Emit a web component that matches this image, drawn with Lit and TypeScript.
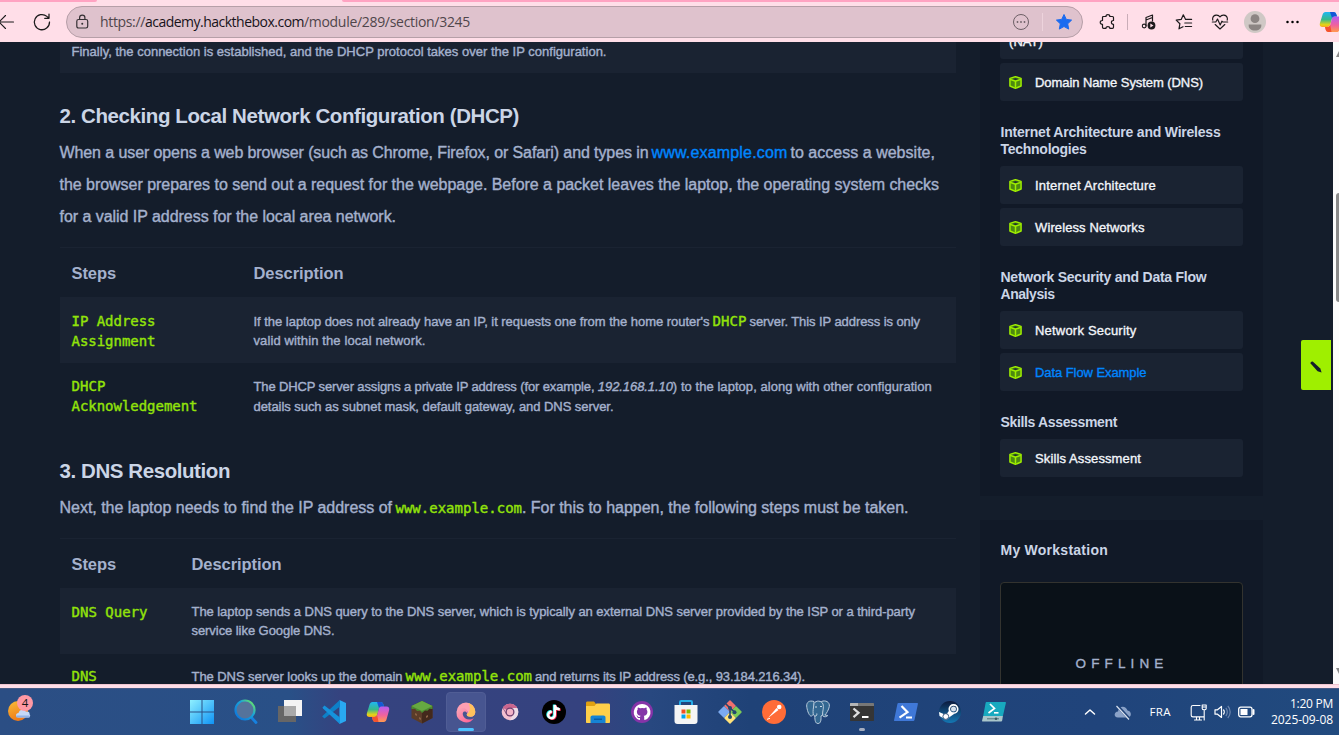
import { LitElement, html, css, svg, nothing } from "lit";
import { customElement, property } from "lit/decorators.js";

/** A run of text tracked so that it fills exactly `width` pixels. */
@customElement("fit-text")
class FitText extends LitElement {
  @property({ type: Number }) width = 0;
  static styles = css`
    :host {
      display: inline-block;
      white-space: pre;
    }
  `;
  render() {
    return html`<slot></slot>`;
  }
  updated() {
    const count = (this.textContent || "").trim().length;
    if (!count || !this.width) return;
    this.style.letterSpacing = "0px";
    const natural = this.getBoundingClientRect().width;
    this.style.letterSpacing = `${(this.width - natural) / count}px`;
  }
}

const fit = (text: string, width: number) =>
  html`<fit-text .width=${width}>${text}</fit-text>`;

const stroke = (d: string, w = 1.2) =>
  svg`<path d=${d} fill="none" stroke="currentColor" stroke-width=${w} stroke-linecap="round" stroke-linejoin="round"></path>`;

const copilot = (id: string) => svg`
  <defs>
    <linearGradient id=${id + "a"} x1="0" y1="0" x2="0" y2="1">
      <stop offset="0" stop-color="#1fb6f3"></stop><stop offset=".5" stop-color="#38b98a"></stop>
      <stop offset=".85" stop-color="#e8d414"></stop><stop offset="1" stop-color="#f5a623"></stop>
    </linearGradient>
    <linearGradient id=${id + "b"} x1="0" y1="0" x2="0" y2="1">
      <stop offset="0" stop-color="#b65cf2"></stop><stop offset=".55" stop-color="#f0629e"></stop>
      <stop offset="1" stop-color="#ff9a4d"></stop>
    </linearGradient>
  </defs>
  <path d="M6.500 2h8c1.500 0 2.300.8 2.700 2l.9 2.600h-2.400c-1.500 0-2.300.8-2.700 2l-1.700 6c-.5 1.500-1.300 2.400-2.900 2.400H3.500C1.300 17 .3 15.400.9 13.300L3.600 4.400C4.100 3 5 2 6.500 2Z" fill=${`url(#${id}a)`}></path>
  <path d="M11 2h3.500c1.500 0 2.300.8 2.700 2l.9 2.600h-2.400c-1.500 0-2.200.7-2.600 2Z" fill="#1557d6"></path>
  <path d="M17.800 22H9.500c-1.400 0-2.300-.8-2.700-2L6 17h2.400c1.600 0 2.400-.9 2.900-2.400l1.700-6c.4-1.300 1.200-2 2.700-2h4.800c2.200 0 3.200 1.600 2.600 3.700l-2.600 9.300c-.4 1.400-1.300 2.400-2.700 2.400Z" fill=${`url(#${id}b)`}></path>
  <path d="M6 17h2.400c1.500 0 2.300-.8 2.800-2.100L12.500 22h-3c-1.400 0-2.300-.8-2.700-2Z" fill="#f4522f"></path>`;

const cube = html`<svg class="cube" viewBox="0 0 14 14">
  <path d="M7 .7 13 2.600v8.200L7 13.300 1 10.800V2.600Z" fill="#4d8a10" stroke="#9fef00" stroke-width="1.600" stroke-linejoin="round"></path>
  <path d="M3.800 3.300 7 2.300l3.200 1L7 4.400Z" fill="#1a2332"></path>
  <path d="M1.200 3.600 7 5.600l5.800-2M7 5.600v7" fill="none" stroke="#9fef00" stroke-width="1.600"></path>
</svg>`;

const apps: { name: string; art: unknown; state?: string }[] = [
  { name: "start", art: svg`<defs><linearGradient id="w" x1="0" y1="0" x2="1" y2="1"><stop offset="0" stop-color="#8ff0ff"></stop><stop offset="1" stop-color="#0f93f5"></stop></linearGradient></defs><path d="M0 0h11.500v11.500H0ZM12.500 0H24v11.500H12.500ZM0 12.500h11.500V24H0ZM12.500 12.500H24V24H12.500Z" fill="url(#w)"></path>` },
  { name: "search", art: svg`<defs><linearGradient id="s" x1="0" y1="1" x2="1" y2="0"><stop offset=".1" stop-color="#0f78dc"></stop><stop offset=".6" stop-color="#19a3d8"></stop><stop offset=".9" stop-color="#63e070"></stop></linearGradient></defs><path d="m17.500 17.500 4.500 5" stroke="#1681e0" stroke-width="2.800" stroke-linecap="round"></path><circle cx="11" cy="10" r="9.500" fill="#55739b" stroke="url(#s)" stroke-width="2.200"></circle>` },
  { name: "task-view", art: svg`<path d="M6 0h18v16H6Z" fill="#f4f4f4"></path><path d="M0 6h18v16H0Z" fill="#666"></path><path d="M6 6h12v10H6Z" fill="#aaa"></path>` },
  { name: "code", art: svg`<path d="M17.500 0 24 3v18l-6.500 3-.1-.1Z" fill="#29a9f2"></path><path d="M17.800 0 1 15.500l-.8 1L2.500 18.500 18 6.500Z" fill="#0d80c8"></path><path d="M17.800 24 1 8.500l-.5-1L2.500 5.500 18 17.500Z" fill="#1592dc"></path>` },
  { name: "copilot", art: copilot("t") },
  { name: "minecraft", art: svg`<path d="m12 1 10.500 5v12L12 23.500 1.500 18V6Z" fill="#5b3c28"></path><path d="m12 11 10.500-5v12L12 23.500Z" fill="#43291c"></path><path d="m12 1 10.500 5v3l-3-.2-2 2-2.500-.4L12 13l-2-2.200-3 .2-2-2.200L1.500 9V6Z" fill="#4b8a32"></path><path d="m12 1 10.500 5L12 11 1.500 6Z" fill="#66a842"></path><path d="m5 13 2 1v2l-2-1Zm4 4 2 1v2l-2-1Zm7-1 2-1v2l-2 1Z" fill="#8b6144"></path>` },
  { name: "edge", state: "active", art: svg`<defs><linearGradient id="e" x1="0" y1="0" x2="1" y2="1"><stop offset="0" stop-color="#f9a9b8"></stop><stop offset="1" stop-color="#ff5b92"></stop></linearGradient></defs><path d="M12 2.500A9.500 9.500 0 0 1 21.300 12c0 3-2 4.800-4.800 4.800-2 0-3.800-.8-3.800-2 0-.8.8-1.200.8-2.500 0-1.600-1.300-2.600-2.800-2.600-2.500 0-4 2.300-4 4.800L2.600 12A9.500 9.500 0 0 1 12 2.500Z" fill="#ff9fb2"></path><path d="M14.500 3.200c4 1 6.800 4.500 6.800 8.800 0 3-2 4.800-4.800 4.800-2 0-3.800-.8-3.800-2 0-.8 1.500-1.400 2.500-3.300 1.200-2.500.8-5.500-.7-8.300Z" fill="#ffc25c"></path><path d="M2.500 12.500C3 9.500 6 8 8.800 8c2.700 0 4.700 1.800 4.700 4 0 .6-.1 1-.3 1.400-.6-1.400-1.600-2-2.500-2-1.800 0-2.200 2-1.800 3.600.6 2.700 3.200 4.500 6.200 4.500 1.800 0 3.300-.5 4.700-1.300a9.500 9.500 0 0 1-17.300-5.700Z" fill="url(#e)"></path>` },
  { name: "chrome", art: svg`<circle cx="12" cy="12" r="8.300" fill="#f3bfd0"></circle><path d="M12 12 4.800 7.850A8.300 8.300 0 0 1 19.200 7.850Z" fill="#c9668e"></path><path d="M12 8h7.250A8.300 8.300 0 0 1 12 20.300L15.500 14Z" fill="#eddbe6"></path><path d="M12 16 8.500 14 4.800 7.850" fill="none" stroke="#8d4c79" stroke-width=".8"></path><circle cx="12" cy="12" r="4.500" fill="#6e3f6f"></circle><circle cx="12" cy="12" r="3.200" fill="#f4b4c8"></circle>` },
  { name: "tiktok", art: svg`<circle cx="12" cy="12" r="12" fill="#000"></circle><g fill="none" stroke-width="2.400"><path d="M12 4.500v10a3.300 3.300 0 1 1-3-3.300M12 4.500c.4 2.900 2.400 4.200 5 4.300" stroke="#25f4ee"></path><path d="M13.600 5.500v10a3.300 3.300 0 1 1-3-3.300M13.600 5.500c.4 2.900 2.400 4.200 5 4.300" stroke="#fe2c55"></path><path d="M12.800 5v10a3.300 3.300 0 1 1-3-3.300M12.800 5c.4 2.900 2.400 4.200 5 4.300" stroke="#fff"></path></g>` },
  { name: "explorer", art: svg`<path d="M0 3c0-1 .6-1.500 1.500-1.500H8L10 4v4H0Z" fill="#e0a011"></path><path d="M0 6h8.500l2-2.500H22.500c1 0 1.500.6 1.500 1.500v17c0 .6-.4 1-1 1H1c-.6 0-1-.4-1-1Z" fill="#ffcf4a"></path><path d="M4.500 23v-5.500c0-1.200.8-2 2-2h11c1.200 0 2 .8 2 2V23Z" fill="#1683d4"></path><path d="M8 18.500h8v1.500H8Z" fill="#0a5ca5"></path>` },
  { name: "github", art: svg`<circle cx="12" cy="12" r="11" fill="#8534a8"></circle><path d="M12 4a8.200 8.200 0 0 0-2.600 16c.5 0 .6-.3.600-.5v-1.600c-2.300.5-2.700-1-2.900-1.500-.3-.6-.8-1-.8-1 .9-.1 1.300.5 1.600 1 .6.900 1.500.7 2.200.4.100-.5.300-.8.500-1-2-.2-3.700-1-3.700-4 0-.9.300-1.600.9-2.200-.1-.2-.4-1.100.1-2.200 0 0 .7-.2 2.300.8a8 8 0 0 1 4 0c1.500-1 2.200-.8 2.200-.8.500 1.100.2 2 .1 2.200.5.600.9 1.300.9 2.200 0 3-1.800 3.800-3.700 4 .3.300.5.800.5 1.500v2.200c0 .2.200.5.600.5A8.200 8.200 0 0 0 12 4Z" fill="#fff"></path>` },
  { name: "store", art: svg`<path d="M6 6V2.200C6 1.500 6.500 1 7.200 1h9.600c.7 0 1.200.5 1.200 1.200V6" fill="none" stroke="#27aee8" stroke-width="2"></path><path d="M.500 5h23v16c0 1.700-1 3-3 3h-17c-2 0-3-1.300-3-3Z" fill="#f5f5f5"></path><path d="M7.500 9.500h4v4h-4Z" fill="#f25022"></path><path d="M12.500 9.500h4v4h-4Z" fill="#7fba00"></path><path d="M7.500 14.500h4v4h-4Z" fill="#00a4ef"></path><path d="M12.500 14.500h4v4h-4Z" fill="#ffb900"></path>` },
  { name: "git", art: svg`<g stroke-linejoin="round" stroke-width="1.500"><path d="m12 1 5 5-5 5-5-5Z" fill="#f0716e" stroke="#f0716e"></path><path d="m6 7 5 5-5 5-5-5Z" fill="#7baaf0" stroke="#7baaf0"></path><path d="m18 7 5 5-5 5-5-5Z" fill="#7dcb58" stroke="#7dcb58"></path><path d="m12 13 5 5-5 5-5-5Z" fill="#ffe27a" stroke="#ffe27a"></path></g><path d="M7.500 3.500 12 8v9M12 8l4.500 4" stroke="#24476f" stroke-width="1.600" fill="none"></path><g fill="#24476f"><circle cx="12" cy="8" r="2"></circle><circle cx="12" cy="17" r="2"></circle><circle cx="16.500" cy="12.300" r="2"></circle></g>` },
  { name: "postman", art: svg`<circle cx="12" cy="12" r="12" fill="#ff6c37"></circle><path d="m6 18 8.500-10 2 2Z" fill="#fff"></path><circle cx="17.200" cy="7" r="2.300" fill="#fff"></circle><path d="m5 19.300 3-1" stroke="#fff" stroke-width="1"></path>` },
  { name: "postgres", art: svg`<g fill="#336791" stroke="#b9cbdc" stroke-width="1" stroke-linejoin="round"><path d="M8 1.500C3 0 .5 2.500.7 6c.2 3.500 2 9 4 10 1.300.6 2.500-1.500 3.500-3Z"></path><path d="M15.500 1.500c4-1.700 8.500.5 7.800 5-.5 3-3 7.500-4.500 8.500l3 .5c-1 1.500-4 1.700-5 .5Z"></path><path d="M8 3.500C10 0 15.500.5 17 4c1.200 3-.5 7-.5 11l-1.500 1c.2 4-.2 7.500-3 7.500s-3-3-3.300-7.500c-2-1-1.700-4-1.500-6.500Z"></path></g><path d="M9 7h2M14 6.500h2M9 16c1.500.3 2-1 1.800-2.500" stroke="#dce6ee" stroke-width=".9" fill="none"></path>` },
  { name: "terminal", state: "running", art: svg`<path d="M0 4c0-.6.400-1 1-1h22c.6 0 1 .4 1 1v16c0 .6-.4 1-1 1H1c-.6 0-1-.4-1-1Z" fill="#353535"></path><path d="M0 6V4c0-.6.400-1 1-1h22c.6 0 1 .4 1 1v2Z" fill="#777"></path><path d="M0 6V4c0-.6.400-1 1-1h7v3Z" fill="#b5b5b5"></path><path d="m3.500 8.500 5 4.300-5 4.300" fill="none" stroke="#ddd" stroke-width="2.300"></path><path d="M12 17h6.500" stroke="#fff" stroke-width="2"></path>` },
  { name: "powershell", art: svg`<path d="M4.500 3H23c.7 0 1 .4.9 1L20.500 20c-.2.700-.6 1-1.200 1H.8c-.6 0-.9-.4-.7-1L3.400 4c.1-.6.500-1 1.100-1Z" fill="#3f78d8"></path><path d="m7.500 6 6 6.200-8 5.500" fill="none" stroke="#fff" stroke-width="2.200"></path><path d="M12 17.500h6" stroke="#fff" stroke-width="2"></path>` },
  { name: "steam", art: svg`<defs><linearGradient id="st" x1="0" y1="0" x2="0" y2="1"><stop offset="0" stop-color="#0c1a3d"></stop><stop offset="1" stop-color="#1478b4"></stop></linearGradient></defs><circle cx="12" cy="12" r="11" fill="url(#st)"></circle><circle cx="15.500" cy="9" r="4.200" fill="none" stroke="#fff" stroke-width="1.700"></circle><circle cx="15.500" cy="9" r="2.500" fill="#d7e2ee"></circle><path d="m1 12 7 3 3.500-5 4.500 4-5 3.500a3.500 3.500 0 0 1-6 .5L1.500 16Z" fill="#fff"></path><circle cx="7.800" cy="16.500" r="2.900" fill="#fff" stroke="#12355f" stroke-width=".8"></circle>` },
  { name: "powershell-ise", art: svg`<path d="M4.500 2H23c.7 0 1 .4.900 1l-3 13H1.200L3.600 3c.1-.6.400-1 .9-1Z" fill="#18a9bf"></path><path d="M1.200 16h19.700l-.7 4.500c-.1.600-.5 1-1.100 1H.8c-.6 0-.9-.4-.7-1Z" fill="#a9c6cb"></path><path d="M5 18.800h12" stroke="#55777e" stroke-width="1"></path><circle cx="14" cy="18.800" r="1.300" fill="#3b5b62"></circle><path d="m8 4 4.500 4.500L6.500 13" fill="none" stroke="#fff" stroke-width="1.700"></path><path d="M12 12.800h4.500" stroke="#fff" stroke-width="1.600"></path>` },
];

@customElement("browser-bar")
class BrowserBar extends LitElement {
  static styles = css`
    :host { display: flex; flex-direction: column; height: 42px; background: #ffdee8; color: #1b1a1b; flex: none; overflow: hidden; }
    .tabs { display: flex; justify-content: space-between; height: 2px; flex: none; }
    .strip { background: #ffa3c2; }
    .strip.left { width: 97px; border-bottom-right-radius: 4px; }
    .strip.right { width: 997px; border-bottom-left-radius: 4px; }
    .row { display: flex; align-items: center; height: 40px; }
    svg { display: block; overflow: visible; flex: none; }
    .back { width: 14px; height: 16px; }
    .reload { width: 18px; height: 18px; margin-left: 19px; }
    .pill { box-sizing: border-box; display: flex; flex: none; align-items: center; width: 1017px; height: 32px; margin-left: 15px; padding-left: 9px; border: 1px solid #b69fa8; border-radius: 16px; background: #dfc2cd; }
    .lock { width: 14px; height: 16px; color: #353034; }
    .url { margin-left: 10px; font: 14px/20px "Open Sans", "Noto Sans", sans-serif; color: #4f464b; }
    .host { color: #17131a; }
    .more { width: 16px; height: 16px; margin-left: auto; color: #6d6066; }
    .sep { width: 1px; height: 18px; background: #edd3dc; margin: 0 12px 0 13px; }
    .fav { width: 18px; height: 18px; margin-right: 9px; }
    .tools { display: flex; align-items: center; flex: none; color: #1d1a1c; }
    .ext { width: 16px; height: 16px; margin-left: 16px; }
    .rule { width: 1px; height: 16px; background: #c9adb8; margin: 0 13px 0 12px; }
    .ico { width: 16px; height: 16px; margin-right: 20px; }
    .ico.shift { margin-left: -1px; }
    .avatar { width: 22px; height: 22px; margin: 0 22px 0 -4px; }
    .dots { width: 16px; height: 16px; margin: 0 18px 0 -3px; }
    .pilot { width: 24px; height: 24px; }
  `;
  render() {
    return html`
      <div class="tabs"><div class="strip left"></div><div class="strip right"></div></div>
      <div class="row">
        <svg class="back" viewBox="0 0 14 16">${stroke("M-1 8h14.500M5.500 1.500-1 8l6.500 6.500", 1.100)}</svg>
        <svg class="reload" viewBox="0 0 18 18">${stroke("M16.500 9a7.600 7.600 0 1 1-2.600-5.600L16 5M16 1v4.300h-4.300", 1.250)}</svg>
        <div class="pill">
          <svg class="lock" viewBox="0 0 14 16">${stroke("M2.500 5.500h7.500c1 0 1.700.7 1.700 1.700v5.100c0 1-.7 1.700-1.700 1.700H2.500c-1 0-1.700-.7-1.700-1.700V7.200c0-1 .7-1.700 1.700-1.700ZM3.600 5.500V3.700a2.650 2.650 0 0 1 5.300 0v1.800", 1.200)}<circle cx="6.250" cy="9.800" r="1" fill="currentColor"></circle></svg>
          <div class="url">${fit("https://", 45)}<span class="host">${fit("academy.hackthebox.com", 159)}</span>${fit("/module/289/section/3245", 166)}</div>
          <svg class="more" viewBox="0 0 16 16"><circle cx="8" cy="8" r="7.500" fill="none" stroke="currentColor" stroke-width="1"></circle><circle cx="4.500" cy="8" r=".9" fill="currentColor"></circle><circle cx="8" cy="8" r=".9" fill="currentColor"></circle><circle cx="11.500" cy="8" r=".9" fill="currentColor"></circle></svg>
          <div class="sep"></div>
          <svg class="fav" viewBox="0 0 18 18"><path d="m9 1.500 2.300 4.900 5.300.7-3.900 3.700 1 5.300L9 13.500l-4.700 2.600 1-5.300L1.400 7.100l5.300-.7Z" fill="#1b6bf0" stroke="#1b6bf0" stroke-linejoin="round"></path></svg>
        </div>
        <div class="tools">
          <svg class="ext" viewBox="0 0 16 16">${stroke("M4.500 2.500h2.500c-.2-2.600 4-2.600 3.800 0H13.500c.6 0 1 .4 1 1v3c-2.800-.2-2.800 4 0 3.800v3c0 .6-.4 1-1 1H10.800c.2-2.300-4-2.300-3.800 0H4.500c-.6 0-1-.4-1-1v-3C.5 10.500.5 6.300 3.500 6.500v-3c0-.6.400-1 1-1Z", 1.200)}</svg>
          <div class="rule"></div>
          <svg class="ico" viewBox="0 0 16 16">${stroke("M5 12V3.500L11.500 1v6M5 6l6.500-2.500", 1.200)}<circle cx="3.200" cy="12" r="1.900" fill="none" stroke="currentColor" stroke-width="1.100"></circle><circle cx="10.500" cy="11.500" r="3.900" fill="currentColor"></circle><path d="m9.300 9.600 3.200 1.900-3.200 1.900Z" fill="#ffdee8"></path></svg>
          <svg class="ico shift" viewBox="0 0 16 16">${stroke("M9.600 5.400 7.300.8 5.200 5.400.2 6.100l3.700 3.600L3 14.800l4-2.100M9.600 5.400h6M8.800 9h6.800M9.300 12.500h6.300", 1.200)}</svg>
          <svg class="ico" viewBox="0 0 16 16">${stroke("M8 3C6.500.3 1.500.4.700 4c-.1.700-.1 1.500.1 2.200M8 3c1.500-2.700 6.500-2.600 7.300 1 .1.700.1 1.500-.1 2.200M3.200 10.500 8 15l4.800-4.500M.3 8h3.500l1.700-3 2.700 6 1.700-3.800.8.8h5", 1.150)}</svg>
          <svg class="avatar" viewBox="0 0 22 22"><circle cx="11" cy="11" r="11" fill="#cfc8c5"></circle><circle cx="11" cy="7.700" r="4.400" fill="#8c8583"></circle><path d="M4.700 13.500h12.600c.5 4-2.500 6-6.300 6s-6.800-2-6.300-6Z" fill="#8c8583"></path></svg>
          <svg class="dots" viewBox="0 0 16 16"><circle cx="2.500" cy="8" r="1.250"></circle><circle cx="7.500" cy="8" r="1.250"></circle><circle cx="12.500" cy="8" r="1.250"></circle></svg>
          <svg class="pilot" viewBox="0 0 24 24">${copilot("b")}</svg>
        </div>
      </div>`;
  }
}

@customElement("lesson-body")
class LessonBody extends LitElement {
  static styles = css`
    :host { display: block; width: 896px; color: #a4b1cd; font: 13px/20px "Liberation Sans", Arial, sans-serif; -webkit-text-stroke: .4px currentColor; }
    .tail { height: 31px; background: #1a2332; }
    .tail-text { padding-left: 11.500px; line-height: 19px; }
    h2 { margin: 0 0 0 -.5px; font-size: 20.500px; line-height: 26px; font-weight: 700; color: #cbd5e6; -webkit-text-stroke: 0; }
    .first { margin-top: 30px; }
    .second { margin-top: 29px; }
    p { margin: 0 0 0 -.5px; font-size: 16px; line-height: 32px; padding-top: 8px; }
    a { color: #0086ff; }
    code { font: 14px/20px "DejaVu Sans Mono", monospace; color: #93e30a; -webkit-text-stroke: .4px currentColor; }
    p code { line-height: 32px; }
    .td > code { display: block; }
    .td > code fit-text { display: block; width: max-content; height: 20px; }
    i { font-style: italic; }
    .line { display: flex; align-items: baseline; gap: 3px; white-space: nowrap; height: 20px; }
    .line.tight, .joined { gap: 0; }
    .joined code { margin-left: 3.500px; }
    p .line { height: 32px; }
    .table { display: grid; border-top: 1px solid #1a2332; }
    .wide { grid-template-columns: 182px 1fr; margin-top: 14px; }
    .narrow { grid-template-columns: 120px 1fr; margin-top: 14px; }
    .th { height: 49px; box-sizing: border-box; padding: 14px 11.500px 0; font-size: 16.500px; font-weight: 700; line-height: 22px; -webkit-text-stroke: 0; }
    .td { height: 66px; box-sizing: border-box; padding: 13px 11.500px 0; }
    .wide .td { padding-top: 14px; }
    .wide .step { padding-top: 13px; }
    .stripe { background: #1a2332; }
    .wide .step.stripe { padding-top: 14px; }
    .short { height: 19px; }
    .narrow .stripe { padding-top: 14px; }
    .last { height: 60px; padding-top: 12px; }
  `;
  render() {
    return html`
      <div class="tail"><div class="tail-text">${fit("Finally, the connection is established, and the DHCP protocol takes over the IP configuration.", 535)}</div></div>
      <h2 class="first">${fit("2. Checking Local Network Configuration (DHCP)", 459.5)}</h2>
      <p>
        <span class="line">${fit("When a user opens a web browser (such as Chrome, Firefox, or Safari) and types in", 589)}<a>${fit("www.example.com", 136)}</a>${fit("to access a website,", 144.5)}</span>
        <span class="line">${fit("the browser prepares to send out a request for the webpage. Before a packet leaves the laptop, the operating system checks", 879.5)}</span>
        <span class="line">${fit("for a valid IP address for the local area network.", 336.5)}</span>
      </p>
      <div class="table wide">
        <div class="th">${fit("Steps", 44.5)}</div><div class="th">${fit("Description", 90)}</div>
        <div class="td step stripe"><code>${fit("IP Address", 84)}${fit("Assignment", 84)}</code></div>
        <div class="td stripe">
          <div class="line">${fit("If the laptop does not already have an IP, it requests one from the home router's", 456)}<code>${fit("DHCP", 34)}</code>${fit("server. This IP address is only", 170.5)}</div>
          <div class="line">${fit("valid within the local network.", 172)}</div>
        </div>
        <div class="td step"><code>${fit("DHCP", 34)}${fit("Acknowledgement", 126)}</code></div>
        <div class="td">
          <div class="line tight">${fit("The DHCP server assigns a private IP address (for example, ", 344.5)}<i>${fit("192.168.1.10", 75)}</i>${fit(") to the laptop, along with other configuration", 259)}</div>
          <div class="line">${fit("details such as subnet mask, default gateway, and DNS server.", 360)}</div>
        </div>
      </div>
      <h2 class="second">${fit("3. DNS Resolution", 170.5)}</h2>
      <p>
        <span class="line joined">${fit("Next, the laptop needs to find the IP address of", 332.5)}<code>${fit("www.example.com", 126.5)}</code>${fit(". For this to happen, the following steps must be taken.", 386.5)}</span>
      </p>
      <div class="table narrow">
        <div class="th">${fit("Steps", 44.5)}</div><div class="th">${fit("Description", 90)}</div>
        <div class="td stripe"><code>${fit("DNS Query", 76)}</code></div>
        <div class="td stripe">
          <div class="line short">${fit("The laptop sends a DNS query to the DNS server, which is typically an external DNS server provided by the ISP or a third-party", 723.5)}</div>
          <div class="line">${fit("service like Google DNS.", 143)}</div>
        </div>
        <div class="td last"><code>${fit("DNS", 25.200)}</code></div>
        <div class="td last">
          <div class="line">${fit("The DNS server looks up the domain", 211)}<code>${fit("www.example.com", 126.500)}</code>${fit("and returns its IP address (e.g., 93.184.216.34).", 270)}</div>
        </div>
      </div>`;
  }
}

const sections: { title: [string, number][]; items: [string, number, boolean?][] }[] = [
  { title: [["Internet Architecture and Wireless", 220], ["Technologies", 86]], items: [["Internet Architecture", 121], ["Wireless Networks", 109.5]] },
  { title: [["Network Security and Data Flow", 206], ["Analysis", 54]], items: [["Network Security", 101.5], ["Data Flow Example", 111.5, true]] },
  { title: [["Skills Assessment", 116.5]], items: [["Skills Assessment", 106]] },
];

@customElement("lesson-nav")
class LessonNav extends LitElement {
  static styles = css`
    :host { display: flex; flex-direction: column; gap: 24px; width: 283px; font: 13px/19px "Liberation Sans", Arial, sans-serif; }
    .panel { box-sizing: border-box; padding: 0 20px; background: #111927; }
    .modules { height: 454px; }
    .items { display: flex; flex-direction: column; gap: 4.400px; }
    .item { box-sizing: border-box; height: 37.600px; display: flex; align-items: center; padding: 2px 9px 0; gap: 13px; border-radius: 3px; background: #1a2332; color: #f2f5fa; -webkit-text-stroke: .35px currentColor; }
    .cut { height: 16.600px; align-items: flex-end; padding-bottom: 8px; border-radius: 0 0 3px 3px; overflow: hidden; }
    .current { color: #0086ff; }
    .cube { width: 13px; height: 13px; flex: none; margin-bottom: 1px; }
    h3 { margin: 23.300px 0 8.100px .5px; font-size: 14px; line-height: 17px; font-weight: 700; color: #cbd5e6; }
    .h { display: block; height: 17px; }
    .station { flex: 1; padding-top: 22px; }
    .station h3 { margin: 0 0 23px .5px; }
    .screen { box-sizing: border-box; height: 160px; padding-top: 71px; padding-left: 1px; border: 1px solid #33332f; border-radius: 4px; background: #0a1118; text-align: center; color: #a4b1cd; font-size: 13.500px; line-height: 20px; -webkit-text-stroke: .35px currentColor; }
  `;
  item([label, width, current]: [string, number, boolean?]) {
    return html`<div class="item ${current ? "current" : ""}">${cube}${fit(label, width)}</div>`;
  }
  render() {
    return html`
      <div class="panel modules">
        <div class="items">
          <div class="item cut">${fit("(NAT)", 34)}</div>
          ${this.item(["Domain Name System (DNS)", 168])}
        </div>
        ${sections.map(
          (s) => html`<h3>${s.title.map(([t, w]) => html`<span class="h">${fit(t, w)}</span>`)}</h3>
            <div class="items">${s.items.map((i) => this.item(i))}</div>`
        )}
      </div>
      <div class="panel station">
        <h3>${fit("My Workstation", 107.5)}</h3>
        <div class="screen">${fit("OFFLINE", 93)}</div>
      </div>`;
  }
}

@customElement("task-bar")
class TaskBar extends LitElement {
  static styles = css`
    :host { box-sizing: border-box; position: relative; display: flex; height: 47px; flex: none; color: #fff; border-top: 1px solid #465b86; background: linear-gradient(90deg, #2b4e84 0, #295087 290px, #35437f 340px, #35427f 590px, #284880 650px, #1f4277 750px, #20447b 1100px, #214a7e 100%); font: 12px/16px "Open Sans", "Noto Sans", sans-serif; }
    svg { display: block; overflow: visible; flex: none; }
    .weather { width: 30px; height: 30px; margin: 4px 0 0 5px; }
    .badge { position: absolute; left: 17px; top: 6px; width: 16px; height: 16px; border-radius: 50%; background: #ff99a4; color: #161616; font-size: 11.500px; line-height: 16px; text-align: center; }
    .pins { display: flex; align-items: flex-start; margin-left: 144.500px; }
    .pin { box-sizing: border-box; display: flex; flex-direction: column; align-items: center; justify-content: space-between; width: 40px; height: 40px; margin: 3px 2px 0; padding: 7px 0 0; border-radius: 4px; border: 1px solid transparent; }
    .pin svg { width: 24px; height: 24px; }
    .active { background: #475590; border-color: #505d95; }
    .mark { height: 3px; border-radius: 2px; flex: none; }
    .active .mark { width: 16px; background: #4cc2ff; }
    .running .mark { width: 6px; background: #a4adc0; }
    .tray { display: flex; align-items: center; margin-left: auto; padding: 0 6px 0 0; }
    .up { width: 12px; height: 8px; }
    .cloud { width: 18px; height: 16px; margin-left: 18px; }
    .lang { margin: 0 19px 0 18px; font-size: 11.500px; }
    .net { width: 17px; height: 17px; }
    .sound { width: 17px; height: 14px; margin-left: 7px; }
    .battery { width: 17px; height: 12px; margin-left: 7px; }
    .clock { margin-left: 16px; text-align: right; font-size: 12px; }
    .clock div { height: 16px; }
  `;
  render() {
    return html`
      <svg class="weather" viewBox="0 0 30 30">
        <defs><linearGradient id="sun" x1="0" y1="0" x2=".4" y2="1"><stop offset="0" stop-color="#f9bd38"></stop><stop offset="1" stop-color="#ef7a1a"></stop></linearGradient></defs>
        <circle cx="13" cy="18" r="10" fill="url(#sun)"></circle>
        <path d="M13.500 24.500c-3.300 0-3.300-4.500 0-4.500.5-3.800 6-4.500 7.500-1.300 2.600-.5 4 1 3.500 2.500 1.500 1.200.5 3.300-1.500 3.300Z" fill="#c5d8f7"></path>
        <path d="M12 23.500h12" stroke="#8fb2e8" stroke-width="2" stroke-linecap="round"></path>
      </svg>
      <div class="badge">4</div>
      <div class="pins">
        ${apps.map(
          (a) => html`<div class="pin ${a.state ?? ""}"><svg viewBox="0 0 24 24">${a.art}</svg>${a.state ? html`<div class="mark"></div>` : nothing}</div>`
        )}
      </div>
      <div class="tray">
        <svg class="up" viewBox="0 0 12 8">${stroke("M1.500 6 6 2l4.500 4", 1.500)}</svg>
        <svg class="cloud" viewBox="0 0 18 16"><path d="M4 13.500C-.8 13.500 0 7.500 4 7.500 4.500 1.500 12 1 13.500 6.500c4.500.5 4.500 7 0 7Z" fill="#8aa2c8"></path><path d="M3 1.500 15.500 15" stroke="#214479" stroke-width="3"></path><path d="M2.500 2 15 15.500" stroke="#d9e1ee" stroke-width="1.200"></path></svg>
        <div class="lang">${fit("FRA", 21.5)}</div>
        <svg class="net" viewBox="0 0 17 17">${stroke("M10 1.500H3C1.800 1.500 1.200 2.200 1.200 3.200v8c0 1 .6 1.700 1.800 1.700H14M4.500 16h7M6.500 13v3M9.500 13v3M14.200 6v10M12.200 1h4v3.500c0 .8-.6 1.300-2 1.300s-2-.5-2-1.300ZM12.300 3h3.800", 1.100)}</svg>
        <svg class="sound" viewBox="0 0 17 14">${stroke("M1 4.800h2.500L7.500 1.500v11l-4-3.300H1ZM9.600 5c.9 1 .9 3 0 4", 1.200)}<path d="M11.800 3c2 2 2 6 0 8M13.800 1c3.200 3.300 3.200 8.700 0 12" fill="none" stroke="#6d86ad" stroke-width="1.200"></path></svg>
        <svg class="battery" viewBox="0 0 17 12"><rect x=".7" y="1.200" width="13.300" height="9.600" rx="2" fill="none" stroke="#fff" stroke-width="1.300"></rect><path d="M2.500 3h7v6h-7Z" fill="#fff"></path><path d="M15.500 4v4" stroke="#fff" stroke-width="2" stroke-linecap="round"></path></svg>
        <div class="clock"><div>${fit("1:20 PM", 43)}</div><div>${fit("2025-09-08", 62)}</div></div>
      </div>`;
  }
}

@customElement("app-root")
class AppRoot extends LitElement {
  static styles = css`
    :host { display: flex; flex-direction: column; width: 1339px; height: 735px; overflow: hidden; }
    .view { position: relative; display: flex; height: 642px; overflow: hidden; background: #141d2b; flex: none; }
    lesson-body { margin-left: 60px; flex: none; }
    lesson-nav { margin-left: 24px; flex: none; height: 700px; }
    .scroll { box-sizing: border-box; display: flex; flex-direction: column; justify-content: space-between; width: 6px; height: 642px; margin-left: auto; padding: 9px 0 10px 3px; background: #fcfcfc; }
    .scroll svg { display: block; width: 3px; height: 6px; }
    .thumb { height: 109px; margin-bottom: 230px; border-radius: 3px 0 0 3px; background: #8b8b8b; }
    .pen { position: absolute; right: 8px; top: 298px; display: grid; place-items: center; width: 30px; height: 50px; border-radius: 2px 0 0 2px; background: #9fef00; }
    .pen svg { width: 12px; height: 12px; margin-top: 3px; }
    .frame { height: 4px; flex: none; background: linear-gradient(#efc5d0 0 1px, #ffdee8 1px); }
  `;
  render() {
    return html`
      <browser-bar></browser-bar>
      <div class="view">
        <lesson-body></lesson-body>
        <lesson-nav></lesson-nav>
        <div class="scroll">
          <svg viewBox="0 0 3 6"><path d="M3 0v6H0Z" fill="#8b8b8b"></path></svg>
          <div class="thumb"></div>
          <svg viewBox="0 0 3 6"><path d="M0 0h3v6Z" fill="#8b8b8b"></path></svg>
        </div>
        <div class="pen"><svg viewBox="0 0 12 12"><path d="M.6 2.600C.2 1.200 1.600-.1 3 .7l7.300 6.800 1.300 4-4-1.200Z" fill="#141d2b"></path></svg></div>
      </div>
      <div class="frame"></div>
      <task-bar></task-bar>`;
  }
}
